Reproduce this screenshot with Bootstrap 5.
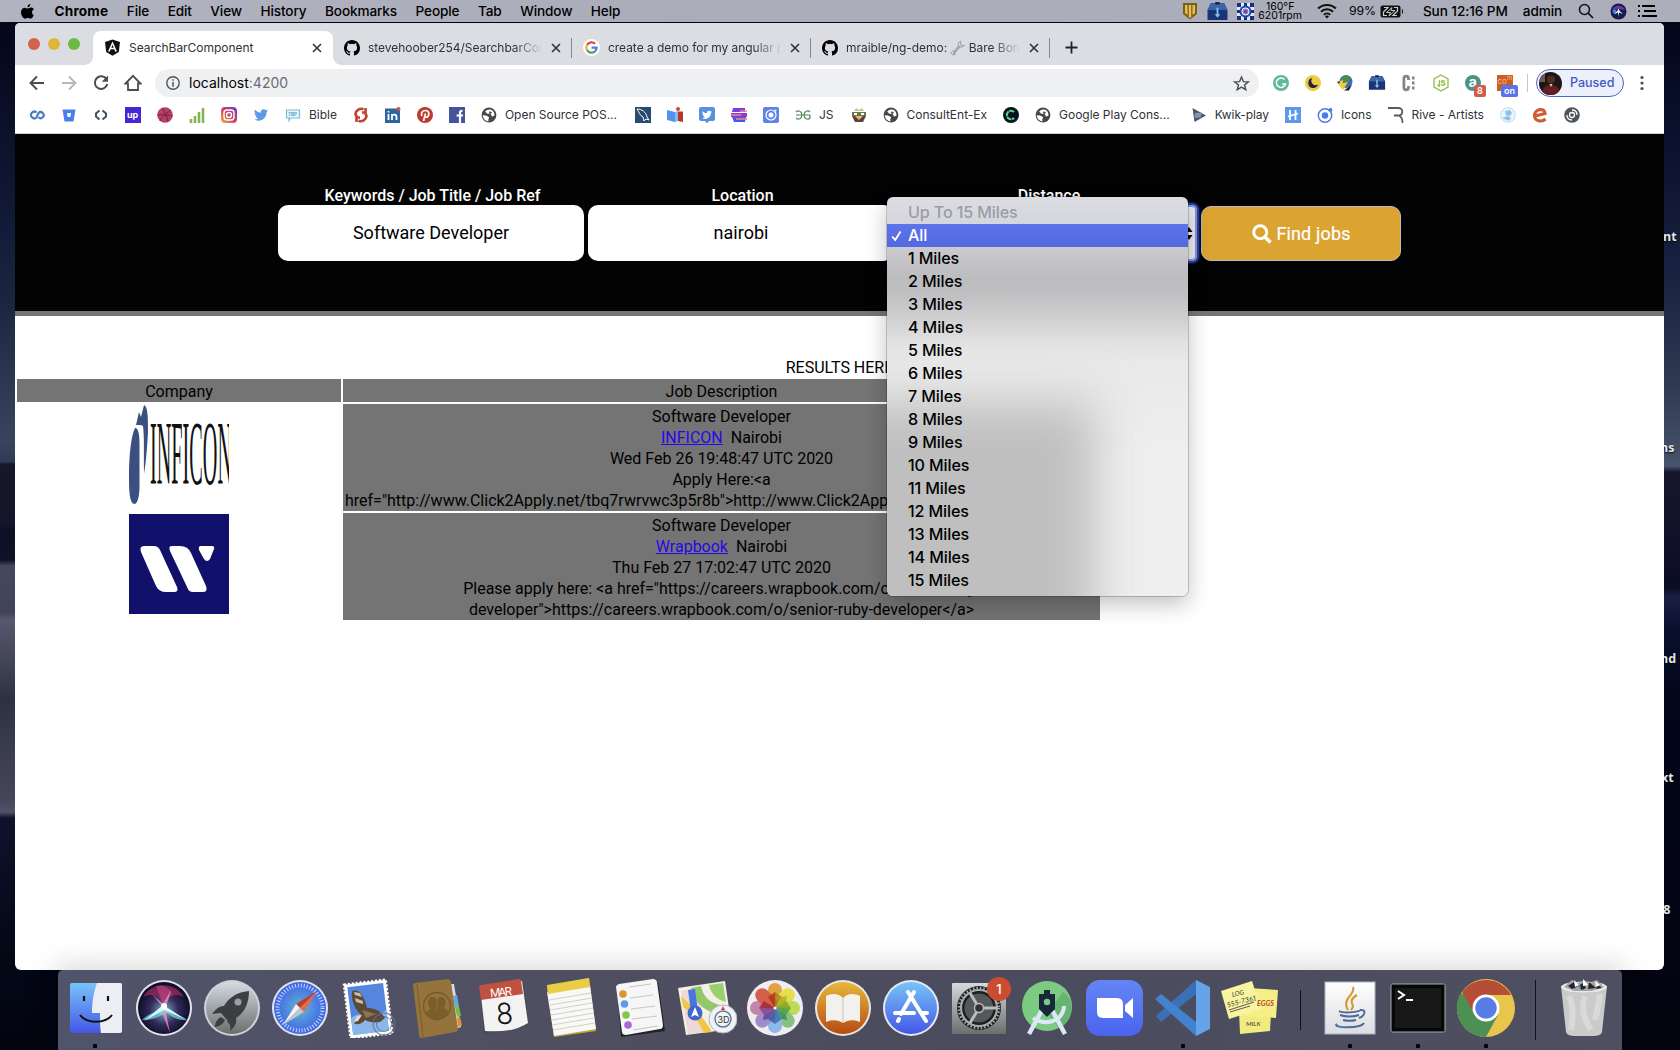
<!DOCTYPE html>
<html lang="en">
<head>
<meta charset="utf-8">
<title>SearchBarComponent</title>
<link rel="stylesheet" href="https://cdn.jsdelivr.net/npm/bootstrap@5.3.0/dist/css/bootstrap.min.css">
<script src="https://cdn.jsdelivr.net/npm/bootstrap@5.3.0/dist/js/bootstrap.bundle.min.js"></script>
<style>
html,body{height:1050px;overflow:hidden}
body{width:1680px;font-family:Roboto,"Liberation Sans",sans-serif;line-height:1.3;color:#000;background:#020514}
svg{display:block;flex:none}
.desktop{width:1680px;height:1050px;position:relative;
 background:
 linear-gradient(#04071a 22px,#111a36 220px,#1c2540 300px,#38445e 440px,#303a54 462px,#17172a 464px,#14152a 525px,#0c0f26 530px,#0e1128 560px,#46485e 566px,#414359 612px,#57586d 620px,#2e3144 700px,#45465a 800px,#50516a 812px,#0e132c 818px,#040818 940px,#02040f 1050px) 0 0/40px 100% no-repeat,
 linear-gradient(#03061a 22px,#0c1230 150px,#17203e 260px,#2e3850 380px,#48526c 466px,#16172c 472px,#101128 550px,#0a0c24 588px,#1a2044 596px,#0a0f2c 630px,#03061a 700px,#02040f 1050px) 100% 0/40px 100% no-repeat,#02040f}
.desk-label{position:absolute;right:0;width:20px;overflow:hidden;font:700 12.5px/16px "Noto Sans",sans-serif;color:#e3e4e8;text-shadow:0 1px 2px #000;z-index:0}
.menubar{height:22px;background:linear-gradient(90deg,#b2b3c0,#abacb9 40%,#adaebb);font:500 13.6px/22px Inter,sans-serif;padding-left:20px;padding-right:23px;letter-spacing:-.12px}
.menubar .apps{gap:18.5px}
.menubar .apps b{letter-spacing:.2px;padding-left:1px}
.menubar .fan{font-size:10.5px;font-weight:400;line-height:9.5px;letter-spacing:0;text-align:center}
.menubar .pct{font-size:12.300px;font-weight:400;margin-left:12px}
.menubar .clock{margin-left:19px;letter-spacing:-.08px}
.menubar .gap-l{margin-left:15px}
.win{width:1649px;height:947px;margin:1px 0 0 15px;background:#fff;border-radius:5px 5px 6px 6px;overflow:hidden;position:relative}
.tabstrip{height:42px;background:#dcdde2;padding:8px 0 0 13px;font:400 12px/26px Inter,sans-serif;color:#303236}
.lights{gap:8px;height:26px;width:65px}
.lights i{width:12px;height:12px;border-radius:50%}
.tab{height:34px;width:239px;padding:0 9px 1px 11px;border-radius:8px 8px 0 0;position:relative}
.tab.on{background:#fff;width:240px}
.tab.on::before,.tab.on::after{content:"";position:absolute;bottom:0;width:8px;height:8px}
.tab.on::before{left:-8px;background:radial-gradient(circle at 0 0,transparent 7.5px,#fff 8px)}
.tab.on::after{right:-8px;background:radial-gradient(circle at 100% 0,transparent 7.5px,#fff 8px)}
.tab .ttl{flex:1;margin-left:8px;overflow:hidden;white-space:nowrap;letter-spacing:-.04px}
.tab.fade-r .ttl{-webkit-mask-image:linear-gradient(90deg,#000 82%,transparent 98%);margin-right:3px}
.tab.sep::before{content:"";position:absolute;right:0;top:7px;height:20px;width:1px;background:#85878c}
.plus{margin:10px 0 0 15px}
.toolbar{height:36px;padding:4px 0 4px 13px}
.toolbar .nav-ico{gap:14px;width:127px}
.omni{height:28px;width:1104px;background:#eff0f2;border-radius:14px;padding:0 9px;font:400 14px/28px Inter,sans-serif}
.omni .port{color:#6a6c70}
.exts{gap:14px;margin-left:13px}
.ext{width:18px;height:18px;position:relative}
.ext b{position:absolute;left:10px;top:11px;height:12px;min-width:12px;padding:0 3px;border-radius:2px;color:#fff;background:#cf5f4c;font:600 9px/12px Inter,sans-serif}
.ext b.onb{left:5px;background:#5a73ec}
.vline{width:1px;height:18px;background:#c6c7ca;margin-left:13px}
.profile{height:28px;width:88px;border:1px solid #4d68c6;border-radius:14px;background:#edf0fb;color:#3f5bc2;font:500 12.5px/26px Inter,sans-serif;margin-left:8px;padding-left:2px}
.profile span{margin-left:8px}
.bookmarks{height:32px;gap:16px;padding-left:14px;font:400 12px/28px Inter,sans-serif;color:#303236;padding-bottom:5px}
.bookmarks span{margin-left:-8px;letter-spacing:-.02px;white-space:nowrap}
.hero{height:183px;background:#030303;border-top:1px solid #cfcfcf;border-bottom:5px solid #757575;padding-top:51px}
.fld{text-align:center;color:#fff;line-height:20px}
.fld>label{display:block;font-weight:500;padding-left:3px;height:20px;line-height:21px}
.fld .box{height:56px;width:306px;border:0;border-radius:10px;background:#fff;color:#000;font:400 18px/56px Roboto,sans-serif;text-align:center;display:block;padding:0 0 1px}
.fld input.box{padding:0 0 0 0}
.fld .sel{width:299px;position:relative;border-radius:5px;background:#ececee;box-shadow:0 0 0 2px #7f92e6 inset,0 0 0 2px #2c3d9c,0 0 3px 2px #2c3d9c}
.sel>svg{position:absolute;right:4px;top:17px}
.find{width:200px;height:55px;border:1px solid #b9bcc2;border-radius:10px;background:#dba431;color:#fff;font:400 18px/53px Roboto,sans-serif;letter-spacing:.15px;-webkit-text-stroke:.2px #fff;gap:4px;padding:0 0 0 1px}
.pop{position:absolute;left:-11px;top:-8px;width:301px;height:399px;border-radius:6px;overflow:hidden;z-index:5;text-align:left;padding:4px 0;
 background:linear-gradient(#dcdde3,#d5d6dc 27px,#cbcbcf 50px,#bdbdc0 80px,#bfbfc1 96px,#d0d0d1 122px,#e2e2e2 146px,#e9e9e9 165px,#efefef 260px);font:450 16.1px/23px Inter,sans-serif;letter-spacing:-.12px}
.pop-wrap{position:absolute;left:-11px;top:-8px;width:301px;height:399px;border-radius:6px;box-shadow:0 0 0 1px rgba(0,0,0,.18),0 8px 22px rgba(0,0,0,.25)}
.pop::before{content:"";position:absolute;left:-60px;top:205px;width:268px;height:260px;background:#bfbfbf;filter:blur(24px)}
.pop div{position:relative;height:23px;padding-left:21px}
.pop .dis{color:#9b9ca1}
.pop .hit{background:linear-gradient(#5c74e9,#5269df);color:#fff}
.pop .hit svg{position:absolute;left:4px;top:6px}
.results{margin-top:41px;height:20px;line-height:21px;margin-bottom:0;text-align:center}
.jobs{border-collapse:separate;border-spacing:2px;width:1087px;table-layout:fixed;line-height:21px;text-align:center}
.jobs td,.jobs th{padding:2px 1px 0;font-weight:400;vertical-align:top}
.jobs .pic{padding-top:1px}
.jobs .g{background:#747474}
.jobs a{color:#2708e6}
.jobs svg{margin:0 auto}
.dock{position:relative;width:1564px;height:80px;margin-left:58px;background:linear-gradient(90deg,#50546a,#504f62 30%,#4b4b5e 60%,#4f4f62);border-radius:5px 5px 0 0;padding:8px 3px 0;box-shadow:0 0 30px 4px rgba(0,0,0,.16);z-index:3}
.app{width:68px;height:72px;position:relative;padding-left:4px}
.app.run::after{content:"";position:absolute;left:32px;top:66px;width:4px;height:4px;border-radius:1px;background:#000}
.app.nudge>svg{margin-left:1px}
.app .bdg{position:absolute;left:42px;top:-1px;width:24px;height:24px;border-radius:50%;background:#cb4c30;color:#fff;font:500 13px/24px Inter,sans-serif;text-align:center}
.split{width:31px;height:64px}
.split i{display:block;width:1px;background:#12121e;margin:12px 0 0 15px;height:40px}
.split.tall i{margin-top:2px;height:60px}
</style>
</head>
<body>
<svg width="0" height="0" class="position-absolute">
<defs>
<linearGradient id="blue" x2="0" y2="1"><stop stop-color="#78c4f8"/><stop offset="1" stop-color="#4457e6"/></linearGradient>
<linearGradient id="grey" x2="0" y2="1"><stop stop-color="#d3dbe1"/><stop offset="1" stop-color="#6d6d6d"/></linearGradient>
<linearGradient id="orange" x2="0" y2="1"><stop stop-color="#e8b83a"/><stop offset="1" stop-color="#b64a14"/></linearGradient>
<linearGradient id="zoomg" x2="0" y2="1"><stop stop-color="#6485f5"/><stop offset="1" stop-color="#4a64ee"/></linearGradient>
<linearGradient id="insta" x1="0" y1="1" x2="1" y2="0"><stop stop-color="#f3b13e"/><stop offset=".5" stop-color="#d3405e"/><stop offset="1" stop-color="#6a3bd0"/></linearGradient>
<radialGradient id="saf"><stop stop-color="#63b9cf"/><stop offset="1" stop-color="#3f62e8"/></radialGradient>
<radialGradient id="siri" cy=".55"><stop stop-color="#e8f6fb"/><stop offset=".2" stop-color="#5d7fa6"/><stop offset=".55" stop-color="#332a58"/><stop offset="1" stop-color="#0d0f2b"/></radialGradient>
<linearGradient id="paper" x2="0" y2="1"><stop stop-color="#fff"/><stop offset="1" stop-color="#dcdde2"/></linearGradient>
<symbol id="gh" viewBox="0 0 16 16"><path d="M8 0C3.58 0 0 3.58 0 8c0 3.54 2.29 6.53 5.47 7.59.4.07.55-.17.55-.38 0-.19-.01-.82-.01-1.49-2.01.37-2.53-.49-2.69-.94-.09-.23-.48-.94-.82-1.13-.28-.15-.68-.52-.01-.53.63-.01 1.08.58 1.23.82.72 1.21 1.87.87 2.33.66.07-.52.28-.87.51-1.07-1.78-.2-3.64-.89-3.64-3.95 0-.87.31-1.59.82-2.15-.08-.2-.36-1.02.08-2.12 0 0 .67-.21 2.2.82a7.6 7.6 0 0 1 4 0c1.53-1.04 2.2-.82 2.2-.82.44 1.1.16 1.92.08 2.12.51.56.82 1.27.82 2.15 0 3.07-1.87 3.75-3.65 3.95.29.25.54.73.54 1.48 0 1.07-.01 1.93-.01 2.2 0 .21.15.46.55.38A8.01 8.01 0 0 0 16 8c0-4.42-3.58-8-8-8z"/></symbol>
<symbol id="cross" viewBox="0 0 14 14"><path d="M3 3l8 8M11 3l-8 8" stroke="#303236" stroke-width="1.6"/></symbol>
<symbol id="globe" viewBox="0 0 16 16"><circle cx="8" cy="8" r="7.4" fill="#45474b"/><path d="M8.500 2.500c-2 0-3.300.8-4.300 2l2 2.300h2.300c1.500 0 2 1 2 2.200l1.300.5 1.700-1.300C13.500 5 11.500 2.500 8.500 2.500zM1.800 8.200l3.200.3 2.500 1.200c1 .8.5 1.800-.2 2.300l.2 2.300C4.500 14 1.800 11.500 1.800 8.200z" fill="#fff"/><path d="M8.500 4.500c1 0 2 .5 2.500 1.300L9.500 7 8 6.200z" fill="#45474b"/></symbol>
<symbol id="box" viewBox="0 0 20 18"><path d="M1 8l3-6h12l3 6v9H1z" fill="#1a3476"/><path d="M1 8l3-6h12l3 6z" fill="#3c64ac"/><path d="M8 1h4v2H8z" fill="#111b3c"/><path d="M9.200 6h1.600v6h1.700L10 15l-2.500-3h1.700z" fill="#8fc2ee"/></symbol>
<symbol id="bird" viewBox="0 0 16 16"><path d="M5.026 15c6.038 0 9.341-5.003 9.341-9.334 0-.14 0-.282-.006-.422A6.685 6.685 0 0 0 16 3.542a6.658 6.658 0 0 1-1.889.518 3.301 3.301 0 0 0 1.447-1.817 6.533 6.533 0 0 1-2.087.793A3.286 3.286 0 0 0 7.875 6.030 9.325 9.325 0 0 1 1.114 2.600a3.289 3.289 0 0 0 1.018 4.382A3.323 3.323 0 0 1 .64 6.575v.045a3.288 3.288 0 0 0 2.632 3.218 3.203 3.203 0 0 1-.865.115 3.230 3.230 0 0 1-.614-.057 3.283 3.283 0 0 0 3.067 2.277A6.588 6.588 0 0 1 .78 13.580a6.320 6.320 0 0 1-.78-.045A9.344 9.344 0 0 0 5.026 15z"/></symbol>
</defs>
</svg>
<div class="desktop">
<nav class="menubar d-flex align-items-center justify-content-between">
 <div class="apps d-flex align-items-center">
  <svg width="15" height="17" viewBox="0 0 15 17"><path d="M10.400 1c.1 1.700-1.300 3.200-2.900 3.200C7.300 2.600 8.700 1.100 10.400 1zM13.800 12.100c-.8 1.800-1.800 3.600-3.200 3.600-1 0-1.500-.6-2.700-.6s-1.800.6-2.700.6C3 15.700 1 12 1 9.300c0-3 1.900-4.600 3.700-4.600 1.200 0 2.100.8 3 .8.700 0 1.900-.9 3.300-.9.600 0 2 .2 2.800 1.600-2.500 1.500-2.200 5 0 5.900z"/></svg>
  <b>Chrome</b><span>File</span><span>Edit</span><span>View</span><span>History</span><span>Bookmarks</span><span>People</span><span>Tab</span><span>Window</span><span>Help</span>
 </div>
 <div class="d-flex align-items-center">
  <svg width="16" height="18" viewBox="0 0 16 18"><path d="M1 1h14v11l-7 5.500L1 12z" fill="#7d5f12"/><path d="M3 3h2.500v10L3 11zM6.800 3h2.400v12l-1.200 1-1.200-1zM10.500 3H13v8l-2.500 2z" fill="#e2bf57"/></svg>
  <svg class="ms-2 me-2" width="23" height="20"><use href="#box"/></svg>
  <svg width="17" height="17" viewBox="0 0 17 17"><path d="M0 0h17v17H0z" fill="#e3e9fa"/><path d="M0 0h4v4H0zM13 0h4v4h-4zM0 13h4v4H0zM13 13h4v4h-4zM7 0h3v3H7zM7 14h3v3H7zM0 7h3v3H0zM14 7h3v3h-3z" fill="#1b2f7e"/><circle cx="8.500" cy="8.500" r="6" fill="#2446a6"/><circle cx="8.500" cy="8.500" r="3.600" fill="#6d8ae0" stroke="#fff"/><circle cx="8.500" cy="8.500" r="1.600" fill="#c9243a"/></svg>
  <div class="fan ms-1">160°F<br>6201rpm</div>
  <svg class="gap-l" width="20" height="16" viewBox="0 0 20 16"><g fill="none" stroke="#111" stroke-width="2"><path d="M1 5.500a13 13 0 0 1 18 0M4 8.800a8.600 8.600 0 0 1 12 0M6.800 11.800a4.600 4.600 0 0 1 6.400 0"/></g><path d="M10 15.500l-2-2.200a3 3 0 0 1 4 0z"/></svg>
  <span class="pct">99%</span>
  <svg class="ms-1" width="24" height="13" viewBox="0 0 24 13"><rect x=".5" y=".5" width="20" height="12" rx="2" fill="#111"/><path d="M22 4v5c1.300-.5 1.300-4.500 0-5z"/><path d="M4 2.500h4L3.500 7v3.500H7M17 10.500h-4L17.500 6V2.500H14" fill="none" stroke="#c9cad4" stroke-width="1.200"/><path d="M12 2.500L6.500 7.500h4L9 11l6-5.500h-4z" fill="#111" stroke="#d7d8e0" stroke-width=".9"/></svg>
  <span class="clock">Sun 12:16 PM</span>
  <span class="gap-l">admin</span>
  <svg class="ms-3" width="16" height="16" viewBox="0 0 16 16"><circle cx="6.500" cy="6.500" r="5" fill="none" stroke="#111" stroke-width="1.500"/><path d="M10 10l5 5" stroke="#111" stroke-width="1.700"/></svg>
  <svg class="ms-3" width="17" height="17" viewBox="0 0 17 17"><circle cx="8.500" cy="8.500" r="8" fill="#171a4c"/><path d="M2 7c2-5 10-6 13 0l-6-1z" fill="#8a3ab9" opacity=".8"/><circle cx="4.500" cy="8.500" r="2" fill="#338ae0"/><path d="M8.500 5.500l1.200 2.500 3.300 3-4-1.500L8.500 14 8 9.500l-4 2 3.300-3.500z" fill="#dff"/></svg>
  <svg style="margin-left:11px" width="19" height="14" viewBox="0 0 19 14"><path d="M4 2h13M6 7h12M4 12h15M0 2h2M0 7h2M0 12h2" stroke="#000" stroke-width="2"/></svg>
 </div>
</nav>

<span class="desk-label" style="top:229px;right:-3px">nt</span>
<span class="desk-label" style="top:440px">ns</span>
<span class="desk-label" style="top:651px">nd</span>
<span class="desk-label" style="top:770px;right:-1px">xt</span>
<span class="desk-label" style="top:902px">&nbsp;8</span>

<main class="win">
 <div class="tabstrip d-flex">
  <div class="lights d-flex align-items-center"><i style="background:#d2614d"></i><i style="background:#e0b53b"></i><i style="background:#6cb945"></i></div>
  <div class="tab on d-flex align-items-center">
   <svg width="17" height="17" viewBox="0 0 17 17"><path d="M8.500.5L16 3l-1.200 10-6.300 3.700L2.200 13 1 3z" fill="#111"/><path d="M8.500 2.500l4.500 10h-1.800l-.9-2.200H6.700l-.9 2.200H4zm0 3.200L7.300 8.800h2.400z" fill="#fff"/></svg>
   <span class="ttl">SearchBarComponent</span><svg width="14" height="14"><use href="#cross"/></svg></div>
  <div class="tab fade-r sep d-flex align-items-center"><svg width="16" height="16"><use href="#gh"/></svg><span class="ttl">stevehoober254/SearchbarComponent</span><svg width="14" height="14"><use href="#cross"/></svg></div>
  <div class="tab fade-r sep d-flex align-items-center"><svg width="17" height="17" viewBox="0 0 17 17"><circle cx="8.500" cy="8.500" r="8.500" fill="#fff"/><g fill="none" stroke-width="2.200"><path d="M12.200 4.800A5.200 5.200 0 0 0 4 6" stroke="#d5503e"/><path d="M4 6a5.200 5.200 0 0 0 0 5" stroke="#e6b73b"/><path d="M4 11a5.200 5.200 0 0 0 8 1.400" stroke="#54a35b"/><path d="M12 12.400a5 5 0 0 0 1.600-3.700H8.500" stroke="#5478e4"/></g></svg><span class="ttl">create a demo for my angular project</span><svg width="14" height="14"><use href="#cross"/></svg></div>
  <div class="tab fade-r sep d-flex align-items-center"><svg width="16" height="16"><use href="#gh"/></svg><span class="ttl">mraible/ng-demo: <svg class="d-inline-block align-middle" width="15" height="16" viewBox="0 0 14 15"><path d="M3 12.500L10.500 4" stroke="#a8aaae" stroke-width="2.600"/><path d="M10 1l-.5 3 1.500 1.500L13.500 5A3.500 3.500 0 0 1 8 5.500 3.500 3.500 0 0 1 10 1zM1 12a2.500 2.500 0 0 1 4-1l-2 1 .5 1.500L5 13a2.200 2.200 0 0 1-4-1z" fill="#e6e7ea" stroke="#86888d" stroke-width=".7"/></svg> Bare Bones Angular</span><svg width="14" height="14"><use href="#cross"/></svg></div>
  <svg class="plus" width="13" height="13" viewBox="0 0 13 13"><path d="M6.500.5v12M.5 6.500h12" stroke="#222" stroke-width="1.800"/></svg>
 </div>
 <div class="toolbar d-flex align-items-center">
  <div class="nav-ico d-flex" >
   <svg width="18" height="18" viewBox="0 0 18 18" fill="none" stroke="#4b4d52" stroke-width="1.900"><path d="M16 9H3M9 2.500L2.500 9 9 15.500"/></svg>
   <svg width="18" height="18" viewBox="0 0 18 18" fill="none" stroke="#b6b7ba" stroke-width="1.900"><path d="M2 9h13M9 2.500L15.500 9 9 15.500"/></svg>
   <svg width="18" height="18" viewBox="0 0 18 18"><path d="M14.600 5.400A6.300 6.300 0 1 0 15.300 10" fill="none" stroke="#4b4d52" stroke-width="2"/><path d="M16 1.500v6.300H9.700z" fill="#4b4d52"/></svg>
   <svg width="18" height="18" viewBox="0 0 18 18"><path d="M1.500 9.500L9 1.800l7.500 7.700H14V16H4V9.500z" fill="none" stroke="#4b4d52" stroke-width="1.800"/></svg>
  </div>
  <div class="omni d-flex align-items-center">
   <svg class="me-2" width="17" height="16" viewBox="-1 0 17 16"><circle cx="8" cy="8" r="6.200" fill="none" stroke="#505257" stroke-width="1.400"/><path d="M8 4.200v1.600M8 7v4.800" stroke="#505257" stroke-width="1.500"/></svg>
   <span>localhost<span class="port">:4200</span></span>
   <svg class="ms-auto" width="17" height="17" viewBox="0 0 17 17"><path d="M8.500 2l1.900 4.600 4.900.3-3.800 3.100 1.300 4.800-4.300-2.700-4.300 2.700 1.300-4.800L1.700 6.900l4.900-.3z" fill="none" stroke="#4b4d52" stroke-width="1.400"/></svg>
  </div>
  <div class="exts d-flex">
   <div class="ext"><svg width="18" height="18" viewBox="0 0 18 18"><circle cx="9" cy="9" r="8" fill="#5fb995"/><path d="M12.500 5.500A4.700 4.700 0 1 0 13.600 10H10" fill="none" stroke="#fff" stroke-width="1.500"/></svg></div>
   <div class="ext"><svg width="18" height="18" viewBox="0 0 18 18"><circle cx="9" cy="9" r="8" fill="#e9ce3d"/><path d="M8.500 4a5 5 0 1 0 5.500 6.500A4.300 4.300 0 0 1 8.500 4z" fill="#27204f"/></svg></div>
   <div class="ext"><svg width="18" height="18" viewBox="0 0 18 18"><circle cx="10" cy="7.500" r="6.500" fill="#3d69b8"/><path d="M4 6c2-5 9-5 11-1l-4 4z" fill="#4f8c40"/><path d="M1 8l6-2v3l5-1-5 8-4-5z" fill="#e7ce3d"/><path d="M8 16.500l8-6-3 6z" fill="#222"/><path d="M1 8l3-1-1 3z" fill="#333"/></svg></div>
   <div class="ext"><svg width="18" height="17"><use href="#box"/></svg></div>
   <div class="ext"><svg width="18" height="18" viewBox="0 0 18 18"><path d="M8.500 6V4.500a2.300 2.300 0 0 0-4.600 0v9a2.300 2.300 0 0 0 4.600 0V12" fill="none" stroke="#858585" stroke-width="2.800"/><path d="M12 4h2.500M12 9h2.500M12 14h2.500" stroke="#858585" stroke-width="2.800"/></svg></div>
   <div class="ext"><svg width="18" height="18" viewBox="0 0 18 18" fill="none" stroke="#93c14b" stroke-width="1.400"><path d="M9 1l7 4v8l-7 4-7-4V5z"/><path d="M7.500 6v6l-2-1M13 7.500c-1-1-3.500-1-3.500.3 0 1.600 3.500.5 3.500 2.300 0 1.500-3 1.500-3.800.2"/></svg></div>
   <div class="ext"><svg width="18" height="18" viewBox="0 0 18 18"><circle cx="9" cy="9" r="8" fill="#4c9285"/><text x="4.800" y="13" font-family="Inter" font-weight="700" font-size="14" fill="#fff">a</text></svg><b>8</b></div>
   <div class="ext"><svg width="18" height="18" viewBox="0 0 18 18"><path d="M1 1h16v16H1z" fill="#cf5f20"/><text x="1.500" y="10" font-family="Inter" font-size="8" fill="#f2b88c">co</text><text x="11" y="6" font-family="Inter" font-size="6" fill="#f2b88c">m</text></svg><b class="onb">on</b></div>
  </div>
  <i class="vline"></i>
  <div class="profile d-flex align-items-center"><svg width="23" height="23" viewBox="0 0 23 23"><clipPath id="av"><circle cx="11.500" cy="11.500" r="11.500"/></clipPath><g clip-path="url(#av)"><path d="M0 0h23v23H0z" fill="#1d1516"/><path d="M0 0h6v10H0z" fill="#6d5a4e"/><circle cx="12" cy="7.500" r="4" fill="#4d2f22"/><path d="M3 23c0-9 5-10 9-10s9 2 9 10z" fill="#641d20"/><path d="M10.500 12l1.500 3 1.500-3z" fill="#d9d2d0"/></g></svg><span>Paused</span></div>
  <svg style="margin-left:16px" width="4" height="16" viewBox="0 0 4 16" fill="#4b4d52"><circle cx="2" cy="2.500" r="1.600"/><circle cx="2" cy="8" r="1.600"/><circle cx="2" cy="13.500" r="1.600"/></svg>
 </div>
 <div class="bookmarks d-flex align-items-center">
  <svg width="16" height="16" viewBox="0 0 16 16" fill="none" stroke="#4e7cc0" stroke-width="2.200"><path d="M7.500 5.500a3.300 3.300 0 1 0 0 5L9.500 6a3 3 0 1 1 0 4.300"/></svg>
  <svg width="16" height="16" viewBox="0 0 16 16"><path d="M1.500 2.500h13l-2 12h-9z" fill="#4a7df0"/><path d="M6 6h4l-.6 4H6.600z" fill="#fff"/></svg>
  <svg width="16" height="16" viewBox="0 0 16 16" fill="none" stroke="#41525c" stroke-width="2"><path d="M6.500 3.500L3 6.500v3l3.500 3M9.500 3.500l3.500 3v3l-3.500 3"/></svg>
  <svg width="16" height="16" viewBox="0 0 16 16"><path d="M0 0h16v16H0z" fill="#4527d3"/><text x="2" y="11" font-family="Inter" font-weight="700" font-size="9" fill="#fff">up</text></svg>
  <svg width="16" height="16" viewBox="0 0 16 16"><circle cx="8" cy="8" r="7.800" fill="#b5406a"/><path d="M5 1c4 5 5 9 6 14M.5 8c6 0 10-1 13-5M3 14c2-6 7-7 12.500-5" stroke="#76223f" fill="none"/></svg>
  <svg width="16" height="16" viewBox="0 0 16 16"><path d="M2 16v-4M6 16V9M10 16V5M14 16V1" stroke="#85b552" stroke-width="2.600"/></svg>
  <svg width="16" height="16" viewBox="0 0 16 16"><rect width="16" height="16" rx="4" fill="url(#insta)"/><g fill="none" stroke="#fff" stroke-width="1.400"><rect x="3" y="3" width="10" height="10" rx="3"/><circle cx="8" cy="8" r="2.500"/></g></svg>
  <svg width="16" height="15" viewBox="-1 0 16 15"><use href="#bird" width="14" height="15" fill="#5c9ae4"/></svg>
  <svg width="16" height="16" viewBox="0 0 16 16"><path d="M1.500 3h13v8H5.500L4 13.500V11H1.500z" fill="#e9f7fb" stroke="#77bdd6" stroke-width="1.200"/><text x="3" y="9" font-family="Inter" font-weight="700" font-size="4.500" fill="#4aa4c4">TBP</text></svg>
  <span>Bible</span>
  <svg width="16" height="16" viewBox="0 0 16 16" fill="none" stroke="#bf4330" stroke-width="2.600"><path d="M10.500 2.300A5.800 5.800 0 0 0 2.500 7c0 1.500.8 2 2 2.300M5.500 13.700A5.800 5.800 0 0 0 13.500 9c0-1.500-.8-2-2-2.300M12.500 1v4.500H9M3.500 15v-4.500H7"/></svg>
  <svg width="16" height="16" viewBox="0 0 16 16"><path d="M0 1.500h15V16H0z" fill="#31639f"/><path d="M3.500 7v6M3.500 4v1.500M7 13V7M7 9c1-2 4.500-2 4.500 1v3" stroke="#fff" stroke-width="1.800" fill="none"/><circle cx="13.500" cy="2" r="2" fill="#d35437"/></svg>
  <svg width="16" height="16" viewBox="0 0 16 16"><circle cx="8" cy="8" r="8" fill="#be3b30"/><path d="M6.500 14L8.500 6.500M5 9C3.500 6 5.500 3.500 8.500 3.500s4 3 3 5-3 2.300-3.700.8" fill="none" stroke="#fff" stroke-width="1.700"/></svg>
  <svg width="16" height="16" viewBox="0 0 16 16"><path d="M0 0h16v16H0z" fill="#42549c"/><path d="M11 16V6c0-1.500.5-2.200 2.500-2M7.500 8.500H14" stroke="#fff" stroke-width="2.200" fill="none"/></svg>
  <svg width="16" height="16"><use href="#globe"/></svg>
  <span>Open Source POS...</span>
  <svg width="16" height="16" viewBox="0 0 16 16" style="margin-left:2px"><path d="M0 0h16v16H0z" fill="#264a70"/><path d="M2 2c5 0 9 3 10 8l2 3-3-1-2 2-1-4C5 9 4 5 2 2z" fill="none" stroke="#fff"/></svg>
  <svg width="16" height="16" viewBox="0 0 16 16"><path d="M0 3l8 2v10l-8-2z" fill="#5591ee"/><path d="M8 5l3-1v10l-3 1z" fill="#89b6f7"/><path d="M11 4.500h5V15l-5-1z" fill="#b43a25"/><circle cx="11" cy="2" r="2" fill="#c24d2d"/></svg>
  <svg width="16" height="16" viewBox="0 0 16 16"><rect width="16" height="14" rx="2" fill="#5690e3"/><path d="M6 14h4l-2 2.500z" fill="#5690e3"/><use href="#bird" x="3" y="2.500" width="10" height="10" fill="#fff"/></svg>
  <svg width="16" height="16" viewBox="0 0 16 16"><path d="M2 1h12v4H1z" fill="#7440e0"/><path d="M0 6h16v4H0z" fill="#9a36cf"/><path d="M1 10h14l-1 5H3z" fill="#4a55ea"/><path d="M9 4h7M0 8h10M5 12h11" stroke="#ea8791" stroke-width="1.400"/></svg>
  <svg width="16" height="16" viewBox="0 0 16 16"><rect width="16" height="16" rx="2" fill="#5d82ee"/><circle cx="8" cy="8" r="5" fill="none" stroke="#fff" stroke-width="1.200"/><circle cx="8" cy="8" r="2.500" fill="#fff"/><circle cx="12.500" cy="3.500" r="1" fill="#fff"/></svg>
  <svg width="16" height="16" viewBox="0 0 16 16" fill="none" stroke="#4b8b56" stroke-width="1.200"><path d="M1 5c2-2 6-1 6 3s-4 5-6 3M1 8h14M15 5c-2-2-6-1-6 3s4 5 6 3V8"/></svg>
  <span>JS</span>
  <svg width="16" height="16" viewBox="0 0 16 16" style="margin-left:1px"><path d="M3 4l2-3 3 2 3-2 2 3z" fill="#b8cd9a"/><path d="M1 5h14v4H1z" fill="#6c7747"/><path d="M1 9h14l-3 6H4z" fill="#5f3e4a"/><path d="M3 6h3v2H3zM10 6h3v2h-3z" fill="#fff"/><path d="M4 9h8l-4 4z" fill="#e4c254"/></svg>
  <svg width="16" height="16"><use href="#globe"/></svg>
  <span>ConsultEnt-Ex</span>
  <svg width="16" height="16" viewBox="0 0 16 16"><circle cx="8" cy="8" r="8" fill="#08121c"/><path d="M11 5a4.200 4.200 0 1 0 0 6" fill="none" stroke="#55d882" stroke-width="2" stroke-dasharray="5 .6"/></svg>
  <svg width="16" height="16"><use href="#globe"/></svg>
  <span>Google Play Cons...</span>
  <svg width="16" height="16" viewBox="0 0 16 16" style="margin-left:5px"><path d="M1.500 1l13.500 7.500-11.500 6.500z" fill="#48586c"/><path d="M4 6l7-.5-1.500 5-6 .5z" fill="#8296ab"/></svg>
  <span style="letter-spacing:-.1px">Kwik-play</span>
  <svg width="16" height="16" viewBox="0 0 16 16"><path d="M0 0h16v16H0z" fill="#5c98ec"/><path d="M5 3v10M10.500 3v10M3 9.500l10-3" stroke="#fff" stroke-width="1.800"/></svg>
  <svg width="16" height="16" viewBox="0 0 16 16"><circle cx="8" cy="8.500" r="6.700" fill="none" stroke="#5078ee" stroke-width="1.500"/><circle cx="8" cy="8.500" r="3.200" fill="#5078ee"/><circle cx="13.500" cy="3" r="1.900" fill="#5078ee"/></svg>
  <span>Icons</span>
  <svg width="16" height="16" viewBox="0 0 16 16" fill="none" stroke="#5a5a5c" stroke-width="1.800"><path d="M0 1h10c6 0 5.500 7.500 0 7.500H6M10.500 8.500c3 1 4 4 4 7.500"/></svg>
  <span>Rive - Artists</span>
  <svg width="16" height="16" viewBox="0 0 16 16"><circle cx="8" cy="8" r="7.300" fill="#eaf5fc" stroke="#b9d9f0"/><path d="M5 4l5-1 2 3-2 3-4-.500zM2 11l6-2 3 2-2 3z" fill="#8fc2ea"/></svg>
  <svg width="16" height="16" viewBox="0 0 16 16"><path d="M3 9l10-2.500C13 0 2 2 2.500 9c.5 6 8 6 11 3" fill="none" stroke="#cf5d31" stroke-width="3.200"/></svg>
  <svg width="16" height="16" viewBox="0 0 16 16"><circle cx="8" cy="8" r="7.800" fill="#4c555c"/><circle cx="8" cy="8" r="2.500" fill="none" stroke="#fff" stroke-width="1.300"/><path d="M8 3c3.500 0 5 2.500 5 5M8 13c-3.500 0-5-2.500-5-5" fill="none" stroke="#fff" stroke-width="1.300"/></svg>
 </div>

 <section class="hero">
  <form class="d-flex justify-content-center gap-1">
   <div class="fld"><label>Keywords / Job Title / Job Ref</label><input class="box" value="Software Developer"></div>
   <div class="fld"><label>Location</label><input class="box" value="nairobi"></div>
   <div class="fld"><label>Distance</label>
    <div class="box sel"><svg width="8" height="22" viewBox="0 0 8 22"><path d="M4 5l3.500 5h-7zM4 18l3.500-5h-7z"/></svg>
     <div class="pop-wrap"></div>
     <div class="pop">
      <div class="dis">Up To 15 Miles</div>
      <div class="hit"><svg width="11" height="12" viewBox="0 0 11 12"><path d="M1.200 6.500l3 3.500L9.500 1.500" fill="none" stroke="#fff" stroke-width="1.900"/></svg>All</div>
      <div>1 Miles</div><div>2 Miles</div><div>3 Miles</div><div>4 Miles</div><div>5 Miles</div><div>6 Miles</div><div>7 Miles</div><div>8 Miles</div><div>9 Miles</div><div>10 Miles</div><div>11 Miles</div><div>12 Miles</div><div>13 Miles</div><div>14 Miles</div><div>15 Miles</div>
     </div>
    </div>
   </div>
   <button type="button" class="find btn d-flex align-items-center justify-content-center align-self-end"><svg width="20" height="20" viewBox="0 0 20 20"><circle cx="8.200" cy="8.200" r="6.500" fill="none" stroke="#fff" stroke-width="3"/><path d="M12.800 12.800l5.700 5.700" stroke="#fff" stroke-width="3.600"/></svg>Find jobs</button>
  </form>
 </section>
 <p class="results">RESULTS HERE</p>
 <table class="jobs">
  <colgroup><col style="width:324px"><col></colgroup>
  <tr><th class="g">Company</th><th class="g">Job Description</th></tr>
  <tr><td class="pic"><svg width="100" height="100" viewBox="0 0 100 100"><path d="M6 23c4 0 5 8 4.500 28v30c0 12-2.500 18-5 18-4 0-5.500-8-5.500-25C0 51 2 31 6 23zM7 20l3-13 2 5 3-12c4 2 4 12 4 27-1 18-2 30-4 42-.5-22 .5-36-1-48-2-1.500-5-1-7-1z" fill="#3b5080"/><g transform="scale(1 2.350)"><text x="21" y="33.700" font-family="Liberation Serif" font-size="39" textLength="82" lengthAdjust="spacingAndGlyphs" fill="#111">INFICON</text></g></svg></td>
   <td class="g">Software Developer<br><a href="#">INFICON</a>&nbsp; Nairobi<br>Wed Feb 26 19:48:47 UTC 2020<br>Apply Here:&lt;a<br>href="http://www.Click2Apply.net/tbq7rwrvwc3p5r8b"&gt;http://www.Click2Apply.net/tbq7rwrvwc3p5r8b&lt;/a&gt;</td></tr>
  <tr><td class="pic"><svg width="100" height="100" viewBox="0 0 100 100"><path d="M0 0h100v100H0z" fill="#11106a"/><g fill="#fff"><path d="M15 32h10q4 0 6 4l17 37q2 5-3 5h-8q-7 0-10-6L12 38q-2-6 3-6zM43 32h8q8 0 11 7l15 33q2 6-3 6H64q-4 0-5-3L41 37q-2-5 2-5zM72 32h11q3 0 2 3l-4 10q-3 4-6 0l-5-9q-1-4 2-4z"/></g></svg></td>
   <td class="g">Software Developer<br><a href="#">Wrapbook</a>&nbsp; Nairobi<br>Thu Feb 27 17:02:47 UTC 2020<br>Please apply here: &lt;a href="https://careers.wrapbook.com/o/senior-ruby-<br>developer"&gt;https://careers.wrapbook.com/o/senior-ruby-developer&lt;/a&gt;</td></tr>
 </table>
</main>

<footer class="dock d-flex">
 <div class="app run"><svg width="60" height="60" viewBox="0 0 60 60"><rect x="5" y="5" width="52" height="50" rx="2" fill="url(#blue)"/><path d="M32 5h23q2 0 2 2v46q0 2-2 2H36c-1-6-1-12-1-20h-8c0-12 2-22 5-30z" fill="#eceef4"/><path d="M19 18v5M43 18v5" stroke="#111" stroke-width="2.200"/><path d="M15 37c7 9 25 9 32 0" fill="none" stroke="#111" stroke-width="2"/></svg></div>
 <div class="app nudge"><svg width="60" height="60" viewBox="0 0 60 60"><circle cx="30" cy="30" r="28" fill="#e4e5ea"/><circle cx="30" cy="30" r="26" fill="url(#siri)"/><path d="M9 19C18 4 40 3 50 19c-6-3-16-3-21 8-3-10-12-12-20-8z" fill="#a62a62" opacity=".7"/><path d="M22 8c8-2 14 2 16 8l-8 12z" fill="#c94f86" opacity=".5"/><path d="M8 42c8-8 17-8 22-14l5 6c5 2 12 3 18 8-8 1-16-3-21-8-6 5-13 8-24 8z" fill="#6fd9d8" opacity=".75"/><path d="M30 26l2 9 4 20-7-18zM28 28L18 16l11 10 8-14-5 17z" fill="#ef8fc5" opacity=".8"/><path d="M10 43l19-16 22 14-21-9z" fill="#d8fbff"/><circle cx="30" cy="28" r="3" fill="#fff"/></svg></div>
 <div class="app nudge"><svg width="60" height="60" viewBox="0 0 60 60"><circle cx="30" cy="30" r="28" fill="#ccd2d7"/><circle cx="30" cy="30" r="26" fill="url(#grey)"/><path d="M47 13c-13 1-21 8-25 15-5 0-8 3-12 8l9-1 7 8-1 1c3 2 4 3 3 9 5-4 7-8 6-13 8-5 13-14 13-27z" fill="#3c3e42"/><circle cx="36" cy="24" r="3.500" fill="#9b9fa3"/><path d="M19 39c-4 2-6 6-6 10 5-1 8-3 10-7z" fill="#3c3e42"/></svg></div>
 <div class="app nudge"><svg width="60" height="60" viewBox="0 0 60 60"><circle cx="30" cy="30" r="28" fill="#e3e6ec"/><circle cx="30" cy="30" r="26" fill="url(#saf)"/><circle cx="30" cy="30" r="22.500" fill="none" stroke="#c7dcff" stroke-width="4" stroke-dasharray="1 1.950"/><path d="M47 13L26 26l4 4z" fill="#c33a26"/><path d="M47 13L30 30l4 4z" fill="#e7694c"/><path d="M13 47l13-21 4 4z" fill="#f3f3f3"/><path d="M13 47l17-17 4 4z" fill="#c2c5cb"/></svg></div>
 <div class="app nudge"><svg width="60" height="60" viewBox="0 0 60 60"><g transform="rotate(-7 30 30)"><path d="M9 4h42v54H9z" fill="#fff" stroke="#fff" stroke-width="2.500" stroke-dasharray="2.200 1.700"/><path d="M12 7h36v48H12z" fill="#5585dc"/><path d="M12 38c10-8 25 4 36-4v21H12z" fill="#8bb6ea"/></g><path d="M14 14c2-3 8-1 10 3 3 5 4 9 5 13 7 0 13 2 18 10l-5 4c-6 1-11 0-15-2-4 5-9 5-11 3l7-8c-6-6-10-14-9-23z" fill="#5c4a38"/><path d="M16 14l6 1 2 4-7-2zM17 20l8 3v3l-7-2z" fill="#c9bda6"/><path d="M24 32l14 4-10 4z" fill="#8d7350"/><path d="M19 38l5-1-4 6-4 1z" fill="#e6dcc8"/><circle cx="46" cy="46" r="11" fill="none" stroke="#66718a" stroke-width="1.300" opacity=".7"/><circle cx="46" cy="46" r="7.500" fill="none" stroke="#4e5d78" opacity=".7"/></svg></div>
 <div class="app nudge"><svg width="60" height="60" viewBox="0 0 60 60"><path d="M44 6h4l7 43-6 2z" fill="#d8dde2"/><path d="M47 18l4-1 2 11-4 1z" fill="#64a8dc"/><path d="M49 29l4-1 2 10-4 1z" fill="#75bd4c"/><path d="M51 40l3-1 2 8-4 2z" fill="#e0902f"/><path d="M7 7q0-1 2-2l33-4q2 0 3 3l7 47q0 3-3 3l-33 6q-3 0-3-3z" fill="#94733c"/><path d="M11 6l6 53" stroke="#7a5c2a"/><circle cx="31" cy="28" r="13.500" fill="none" stroke="#765923" stroke-width="1.300"/><path d="M20 35c1-3 4-3 4-5-4-5-2-11 3-11 2 0 3 1 4 3 1-2 2-3 4-3 5 0 6 7 3 11 1 2 4 2 5 4-6 9-17 9-23 1z" fill="#7c5e2b"/><path d="M31 22c1 4 0 8-2 11" fill="none" stroke="#94733c"/></svg></div>
 <div class="app"><svg width="60" height="60" viewBox="0 0 60 60"><path d="M7 12l44-7 5 43-45 8z" fill="#454c55"/><path d="M7 9l42-6 6 42q-15 10-43 8z" fill="#f3f3f3"/><path d="M6 9q0-2 2-2l38-6q2 0 2 2l2 13-42 6z" fill="#bf513f"/><text transform="rotate(-6 30 15)" x="17" y="18" font-family="Inter" font-size="11.500" fill="#fff" textLength="22">MAR</text><text transform="rotate(-4 30 35)" x="23" y="46" font-family="Inter" font-weight="300" font-size="29" fill="#111" textLength="17" lengthAdjust="spacingAndGlyphs">8</text></svg></div>
 <div class="app"><svg width="60" height="60" viewBox="0 0 60 60"><path d="M6 8l42-8 7 53-42 6z" fill="#c3a83a"/><path d="M6 14l43-7 6 44-42 7z" fill="#f8f8f6"/><path d="M6 7l42-7 1 9-42 7z" fill="#e9cd46"/><path d="M8 22l42-7M9 27l42-7M9 32l42-7M10 37l42-7M11 42l42-7M11 47l42-7M12 52l42-7" stroke="#cccbc5" stroke-width=".9"/></svg></div>
 <div class="app"><svg width="60" height="60" viewBox="0 0 60 60"><path d="M8 10l41-6 7 49-44 6z" fill="#202128"/><path d="M7 9q0-2 3-3l34-5q3 0 4 3l6 43q0 4-3 4l-34 6q-4 0-4-3z" fill="#f6f6f7"/><g stroke="#c5c5c8"><path d="M20 9l22-3M21 20l23-3M22 31l24-3M23 41l25-3M24 52l25-4"/></g><circle cx="14" cy="16" r="3.800" fill="#dd942f"/><circle cx="15.500" cy="26" r="3.800" fill="#5b9bea"/><circle cx="17" cy="37" r="3.800" fill="#7ec84a"/><circle cx="19" cy="47" r="3.800" fill="#ab68d4"/></svg></div>
 <div class="app"><svg width="60" height="60" viewBox="0 0 60 60"><path d="M1 10l47-7 7 48-46 6z" fill="#f3f0e8"/><path d="M4 13l17-3 7 44-17 2z" fill="#efd8d8"/><path d="M14 10l10-2c3 14 12 18 27 21l2 10C35 36 18 30 14 10z" fill="#92c868"/><path d="M32 7l14-2 3 19c-9-2-15-8-17-17z" fill="#98d06c"/><path d="M4 18c14 14 24 23 31 36l-8 1C20 40 12 33 6 29z" fill="#eec747"/><path d="M11 12l7-1 4 30-7 1z" fill="#4776de"/><circle cx="18" cy="35" r="7.500" fill="#3f66cf"/><path d="M18 29l4 10-4-2-4 2z" fill="#fff"/><circle cx="46" cy="41" r="14" fill="#f1f2f3" stroke="#b7b8bc"/><circle cx="46" cy="41" r="8" fill="none" stroke="#56799f" stroke-width="1.400"/><text x="40.500" y="44.500" font-family="Inter" font-size="9" fill="#333">3D</text><path d="M46 28l2 4h-4z" fill="#d1412d"/></svg></div>
 <div class="app"><svg width="60" height="60" viewBox="0 0 60 60"><circle cx="30" cy="30" r="28" fill="#eeeef0"/><g opacity=".92"><rect x="23" y="5" width="14" height="25" rx="7" fill="#e29b35"/><rect x="23" y="5" width="14" height="25" rx="7" fill="#e6de3e" transform="rotate(45 30 30)"/><rect x="23" y="5" width="14" height="25" rx="7" fill="#bcd94c" transform="rotate(90 30 30)"/><rect x="23" y="5" width="14" height="25" rx="7" fill="#80bd78" transform="rotate(135 30 30)"/><rect x="23" y="5" width="14" height="25" rx="7" fill="#86b4ea" transform="rotate(180 30 30)"/><rect x="23" y="5" width="14" height="25" rx="7" fill="#9884c9" transform="rotate(225 30 30)"/><rect x="23" y="5" width="14" height="25" rx="7" fill="#c07da8" transform="rotate(270 30 30)"/><rect x="23" y="5" width="14" height="25" rx="7" fill="#d3543d" transform="rotate(315 30 30)"/></g><g opacity=".75"><path d="M30 30l-7-11 7-5v16z" fill="#a8330f"/><path d="M30 30V14l7 5z" fill="#a87512"/><path d="M30 30l7-11 5-1-1 5z" fill="#a9a81c"/><path d="M30 30l16 0-5-7z" fill="#7f9c1c"/><path d="M30 30h16l-5 7z" fill="#4f9a3a"/><path d="M30 30l11 7 1 5-5-1z" fill="#2f8656"/><path d="M30 30l7 11-7 5z" fill="#2b6fa0"/><path d="M30 30v16l-7-5z" fill="#3b4f9f"/><path d="M30 30l-7 11-5 1 1-5z" fill="#4b3f8f"/><path d="M30 30H14l5 7z" fill="#7d3f8f"/><path d="M30 30H14l5-7z" fill="#97213a"/></g><circle cx="30" cy="30" r="1.500" fill="#fff"/></svg></div>
 <div class="app"><svg width="60" height="60" viewBox="0 0 60 60"><circle cx="30" cy="30" r="28" fill="#e9e6e3"/><circle cx="30" cy="30" r="26" fill="url(#orange)"/><path d="M30 20c-4-5-12-5-17-2v26c6-3 13-2 17 1 4-3 11-4 17-1V18c-5-3-13-3-17 2z" fill="#f3f1ee"/><path d="M30 20v25" stroke="#c8c2bc"/></svg></div>
 <div class="app"><svg width="60" height="60" viewBox="0 0 60 60"><circle cx="30" cy="30" r="28" fill="#e4e8f0"/><circle cx="30" cy="30" r="26" fill="url(#blue)"/><g stroke="#fff" stroke-width="4" stroke-linecap="round"><path d="M33 14L20 36M27 14l18 29M14 35h19M40 35h6M18 41l-1 2"/></g></svg></div>
 <div class="app"><svg width="60" height="60" viewBox="0 0 60 60"><rect x="3" y="5" width="54" height="51" rx="1" fill="url(#grey)"/><circle cx="30" cy="30" r="22" fill="#1d1e20"/><circle cx="30" cy="30" r="18" fill="none" stroke="#a9abad" stroke-width="2.200"/><circle cx="30" cy="30" r="20" fill="none" stroke="#aaa" stroke-width="2.500" stroke-dasharray="1.500 2"/><circle cx="30" cy="30" r="14.500" fill="#55585b"/><path d="M30 30L21 15M30 30h18M30 30l-9 15" stroke="#b9bbbd" stroke-width="3"/><circle cx="30" cy="30" r="4.500" fill="#333" stroke="#b9bbbd" stroke-width="1.500"/></svg><span class="bdg">1</span></div>
 <div class="app"><svg width="60" height="60" viewBox="0 0 60 60"><circle cx="30" cy="28" r="25" fill="#7bcb83"/><path d="M30 35L46 14c13 8 11 30-4 36z" fill="#66b470"/><path d="M25 32L12 56M35 32l13 24" stroke="#dbe8f5" stroke-width="4.500"/><path d="M16 40c12 8 30 4 31-12" fill="none" stroke="#dbe8f5" stroke-width="4"/><path d="M22 16h5v-4h6v4h5v15l-8 8-8-8z" fill="#16283a"/><circle cx="30" cy="24" r="3.200" fill="#7bcb83"/></svg></div>
 <div class="app"><svg width="60" height="60" viewBox="0 0 60 60"><rect x="1" y="2" width="57" height="56" rx="14" fill="url(#zoomg)"/><path d="M12 20h20q6 0 6 6v14H18q-6 0-6-6zM40 27l8-7v20l-8-7z" fill="#fff"/></svg></div>
 <div class="app run"><svg width="60" height="60" viewBox="0 0 60 60"><path d="M3 38l5 6L43 16V2z" fill="#3970b7"/><path d="M2 21l6-5 35 28v14z" fill="#4282cf"/><path d="M43 2l14 7v42l-14 7z" fill="#66a3eb"/></svg></div>
 <div class="app"><svg width="60" height="60" viewBox="0 0 60 60"><path d="M18 32l32 3-1 18-30 3z" fill="#f2ec80"/><path d="M27 10l30 2-2 28-31-2z" fill="#f5ef86"/><path d="M0 13l31-10 9 28-32 10z" fill="#f9f4a0"/><g fill="#333" font-family="Lato" font-style="italic"><text transform="rotate(-14 20 20)" x="12" y="17" font-size="6.500">LOG</text><text transform="rotate(-14 20 26)" x="6" y="26" font-size="7">555-7361</text><text x="25" y="48" font-size="6.500">MILK</text><text x="36" y="28" font-size="7" font-weight="700" fill="#b93c2b">EGGS</text></g><path d="M8 32l25-8M9 34l20-6" stroke="#333" stroke-width=".8"/></svg></div>
 <div class="split"><i></i></div>
 <div class="app run"><svg width="60" height="60" viewBox="0 0 60 60"><rect x="5" y="4" width="50" height="52" fill="url(#paper)" stroke="#a9b5c4"/><g fill="none" stroke="#d69a32" stroke-width="2.200"><path d="M33 9c3 8-12 11-5 23M37 17c-8 5-5 8-4 11 0 2-1 3-2 4"/></g><g fill="none" stroke="#4b6c96" stroke-width="2"><path d="M19 33c3 2 17 2 22-1M20 37c5 2 14 2 19 0M23 42c4 1 9 1 13 0M40 32c7-1 5 6-1 8M17 46c-6 4 24 5 27-1"/></g></svg></div>
 <div class="app run"><svg width="60" height="60" viewBox="0 0 60 60"><rect x="3" y="6" width="54" height="48" rx="1.500" fill="#080808" stroke="#a8a9ad"/><rect x="7" y="10" width="46" height="40" fill="#181818"/><path d="M10 13l6 4-6 4M18 22h7" fill="none" stroke="#fff" stroke-width="2"/></svg></div>
 <div class="app run"><svg width="60" height="60" viewBox="0 0 60 60"><circle cx="30" cy="30" r="29" fill="#e7c64b"/><path d="M30 30L5 15a29 29 0 0 0 25 44l12-22z" fill="#4d9054"/><path d="M6 14a29 29 0 0 1 49 3H30L18 35z" fill="#b54d37"/><circle cx="30" cy="30" r="13.500" fill="#fff"/><circle cx="30" cy="30" r="10.700" fill="#587ce5"/></svg></div>
 <div class="split tall"><i></i></div>
 <div class="app"><svg width="60" height="60" viewBox="0 0 60 60"><path d="M6 8h46l-5 46q-1 4-9 4H20q-8 0-9-4z" fill="#cbcbcc"/><path d="M14 18q6 12 2 34M30 18q-6 16 6 34M45 16q-2 14-5 26" stroke="#dcdcdd" stroke-width="6" fill="none" opacity=".8"/><ellipse cx="29" cy="9" rx="23" ry="5.500" fill="#e9e9ea"/><path d="M9 9l8-7 6 3 6-3 5 3 8-3 7 7-12 4H19z" fill="#a5a5a9"/><path d="M13 8l6-4 3 5-5 2zM34 4l7 6-8 1zM23 8l5-3 3 5-4 2zM42 6l5 4-6 1z" fill="#26262a"/><path d="M19 2l5 5-4 2zM28 1l5 6-5 1zM40 3l5 4-4 2z" fill="#fff"/><path d="M21 8l4-1 1 3z" fill="#3d9fc4"/></svg></div>
</footer>
</div>
</body>
</html>
